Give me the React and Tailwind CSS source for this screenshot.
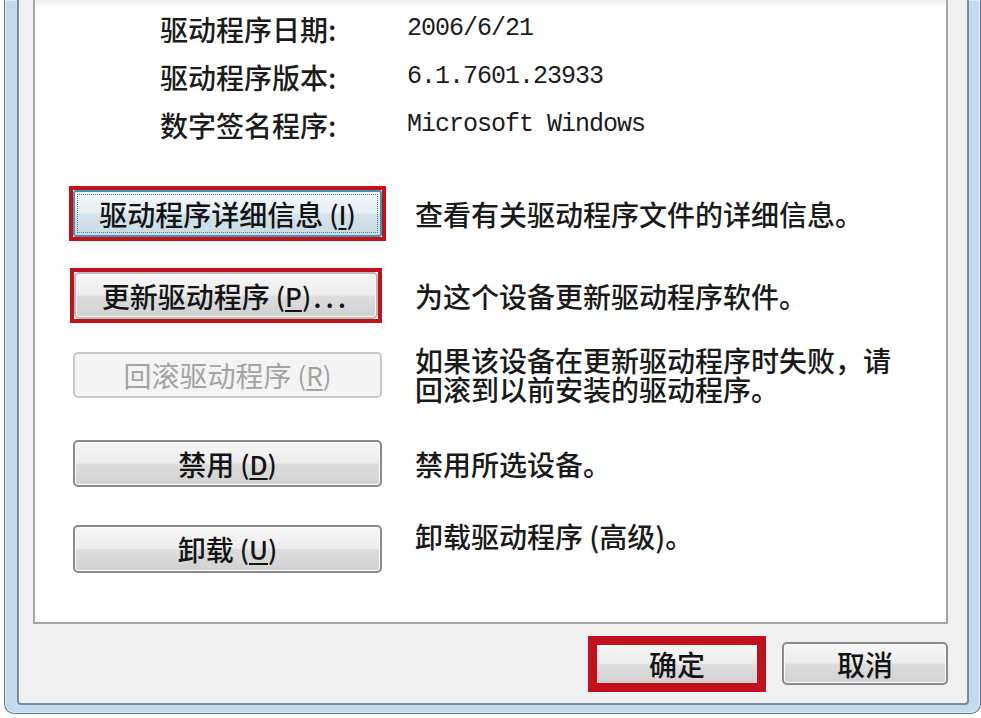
import React from 'react'

// win7 style push buttons
const btnNormal = "flex items-center justify-center rounded-[5px] border-2 border-[#8a8a8a] bg-[linear-gradient(to_bottom,#f6f6f6_0%,#ededed_48%,#dddddd_52%,#d1d1d1_100%)] shadow-[inset_0_0_0_1px_#fbfbfb] text-[28px] leading-none text-[#141414]"
const btnDisabled = "flex items-center justify-center rounded-[5px] border-2 border-[#c9c9c9] bg-[#f4f4f4] text-[28px] leading-none text-[#a3a3a3]"

const Key = ({ k }) => (
  <span className="ml-[6px] text-[26px]">
    (<span className="underline decoration-[2px] underline-offset-[3px]">{k}</span>)
  </span>
)

const InfoRow = ({ label, value }) => (
  <div className='flex h-[48px] items-center pl-[125px]'>
    <span className='w-[247px] text-[28px] font-medium text-[#1c1c1c]'>{label}:</span>
    <span className="font-['Liberation_Mono',monospace] text-[25px] tracking-[-1px] text-[#1c1c1c]">{value}</span>
  </div>
)

const App = () => {
  return (
    <div className="h-[718px] w-[981px] overflow-hidden bg-white font-['Noto_Sans_CJK_SC',sans-serif]">
      {/* window frame */}
      <div className='ml-[4px] h-[714px] w-[977px] rounded-b-[10px] border-x border-b border-[#62738a] bg-[#c3dbf1] pb-[8px] pl-[12px] pr-[11px] shadow-[inset_0_0_0_1px_#e2eefa]'>
        <div className='flex h-full flex-col rounded-b-[4px] border-x-2 border-b-2 border-[#7a8b9e] bg-[#f0f0f0] pl-[14px] pr-[19px]'>

          {/* tab panel */}
          <div className='flex-1 border-x-2 border-b-2 border-[#a6a6a6] bg-[linear-gradient(to_bottom,#ececec_0px,#ffffff_8px)] pt-[5px]'>
            <InfoRow label='驱动程序日期' value='2006/6/21' />
            <InfoRow label='驱动程序版本' value='6.1.7601.23933' />
            <InfoRow label='数字签名程序' value='Microsoft Windows' />

            {/* details */}
            <div className='mt-[37px] flex items-center'>
              <div className='ml-[34px] w-[317px]'>
                <div className='border-[4px] border-[#c0111d]'>
                  <div className="flex h-[47px] items-center justify-center rounded-[3px] border-2 border-[#4a93ad] bg-[linear-gradient(to_bottom,#f3f8fa_0%,#e6eff3_48%,#d5e3ea_52%,#c9dbe4_100%)] text-[28px] font-medium leading-none text-[#141414] outline-1 outline-dotted outline-[#3d7f92] outline-offset-[-5px]">
                    驱动程序详细信息<Key k='I' />
                  </div>
                </div>
              </div>
              <p className='ml-[29px] text-[28px] font-medium leading-[32px] text-[#1a1a1a]'>查看有关驱动程序文件的详细信息。</p>
            </div>

            {/* update */}
            <div className='mt-[27px] flex items-center'>
              <div className='ml-[34px] w-[317px]'>
                <div className='ml-[1px] w-[312px] border-[4px] border-[#c0111d]'>
                  <div className={`h-[47px] rounded-[2px] font-medium ${btnNormal} border-[#b9b9b9]`}>
                    更新驱动程序<Key k='P' /><span className='ml-[2px] tracking-[4px]'>...</span>
                  </div>
                </div>
              </div>
              <p className='ml-[29px] text-[28px] font-medium leading-[32px] text-[#1a1a1a]'>为这个设备更新驱动程序软件。</p>
            </div>

            {/* rollback */}
            <div className='mt-[23px] flex items-center'>
              <div className='ml-[34px] w-[317px]'>
                <div className={`ml-[4px] h-[46px] w-[309px] ${btnDisabled}`}>
                  回滚驱动程序<Key k='R' />
                </div>
              </div>
              <div className='ml-[29px] flex flex-col text-[28px] font-medium leading-[29px] text-[#1a1a1a]'>
                <span className='h-[29px]'>如果该设备在更新驱动程序时失败，请</span>
                <span className='h-[29px]'>回滚到以前安装的驱动程序。</span>
              </div>
            </div>

            {/* disable */}
            <div className='mt-[36px] flex items-center'>
              <div className='ml-[34px] w-[317px]'>
                <div className={`ml-[4px] h-[47px] w-[309px] font-medium ${btnNormal}`}>
                  禁用<Key k='D' />
                </div>
              </div>
              <p className='ml-[29px] text-[28px] font-medium leading-[32px] text-[#1a1a1a]'>禁用所选设备。</p>
            </div>

            {/* uninstall */}
            <div className='mt-[38px] flex items-start'>
              <div className='ml-[34px] w-[317px]'>
                <div className={`ml-[4px] h-[48px] w-[309px] font-medium ${btnNormal}`}>
                  卸载<Key k='U' />
                </div>
              </div>
              <p className='-mt-[5px] ml-[29px] text-[28px] font-medium leading-[32px] text-[#1a1a1a]'>卸载驱动程序 (高级)。</p>
            </div>
          </div>

          {/* footer */}
          <div className='flex h-[79px] items-center justify-end gap-[16px]'>
            <div className='h-[56px] w-[178px] border-[9px] border-[#c0111d]'>
              <div className='flex h-full items-center justify-center bg-[linear-gradient(to_bottom,#f6f6f6_0%,#ededed_48%,#dddddd_52%,#d1d1d1_100%)] text-[28px] font-medium leading-none text-[#141414]'>
                确定
              </div>
            </div>
            <div className={`h-[43px] w-[166px] font-medium ${btnNormal}`}>取消</div>
          </div>
        </div>
      </div>
    </div>
  )
}

export default App
